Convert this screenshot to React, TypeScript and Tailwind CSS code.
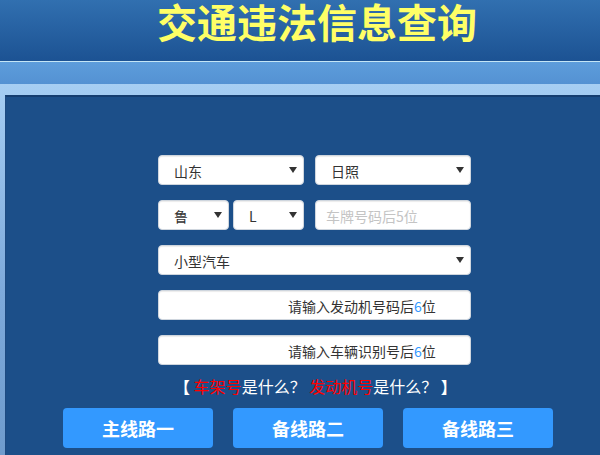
import React from "react";

const font = { fontFamily: '"Microsoft YaHei", "Noto Sans CJK SC", "Noto Sans", sans-serif' };

function Caret() {
  return (
    <span className="absolute right-[6px] top-[11px] h-0 w-0 border-x-[4px] border-t-[6px] border-x-transparent border-t-[#333]" />
  );
}

function SelectBox({ label, className }: { label: string; className: string }) {
  return (
    <div
      className={`relative flex h-[30px] items-center rounded-[4px] border border-[#cfd6de] bg-white pl-[15px] pt-[2px] text-[14px] text-[#333] shadow-[inset_0_1px_1px_rgba(0,0,0,0.08)] ${className}`}
    >
      {label}
      <Caret />
    </div>
  );
}

function TextBox({ children }: { children: React.ReactNode }) {
  return (
    <div className="flex h-[30px] w-[313px] items-center rounded-[4px] border border-[#cfd6de] bg-white pl-[129px] pt-[2px] text-[14px] text-[#333] shadow-[inset_0_1px_1px_rgba(0,0,0,0.08)]">
      {children}
    </div>
  );
}

export default function App() {
  return (
    <div className="h-[455px] w-[600px] overflow-hidden bg-[#1c4f89]" style={font}>
      {/* header */}
      <div className="flex h-[61px] justify-center bg-gradient-to-b from-[#3170b0] to-[#1c5293] pl-[34px]">
        <h1 className="text-[40px] font-bold leading-[42px] text-[#ffff66]">
          交通违法信息查询
        </h1>
      </div>
      <div className="h-px bg-[#c4e6f6]" />
      <div className="h-[22px] bg-gradient-to-b from-[#5d9ddb] to-[#5492d3]" />

      {/* body */}
      <div className="bg-gradient-to-b from-[#a6cef3] via-[#7eaadb] to-[#6b98c9] pl-[5px] pt-[11px]">
        <div className="h-[400px] border-l border-t-2 border-l-[#1e4a80] border-t-[#153e70] bg-[#1c4f89] pt-[58px]">
          <div className="ml-[152px] flex w-[313px] flex-col gap-[15px]">
            <div className="flex justify-between">
              <SelectBox label="山东" className="w-[146px]" />
              <SelectBox label="日照" className="w-[156px]" />
            </div>
            <div className="flex justify-between">
              <div className="flex gap-[4px]">
                <SelectBox label="鲁" className="w-[71px]" />
                <SelectBox label="L" className="w-[71px]" />
              </div>
              <div className="flex h-[30px] w-[156px] items-center rounded-[4px] border border-[#cfd6de] bg-white pl-[10px] pt-[2px] text-[14px] text-[#c4c4c4] shadow-[inset_0_1px_1px_rgba(0,0,0,0.08)]">
                车牌号码后5位
              </div>
            </div>
            <SelectBox label="小型汽车" className="w-[313px]" />
            <TextBox>
              请输入发动机号码后<span className="text-[#3399ff]">6</span>位
            </TextBox>
            <TextBox>
              请输入车辆识别号后<span className="text-[#3399ff]">6</span>位
            </TextBox>
          </div>

          <p className="mt-[10px] pl-[168px] text-[16px] leading-[22px] text-white">
            <span className="font-bold">【</span> <span className="text-[#ff0000]">车架号</span>是什么？ <span className="text-[#ff0000]">发动机号</span>是什么？ <span className="font-bold">】</span>
          </p>

          <div className="ml-[57px] mt-[11px] flex gap-[20px]">
            {["主线路一", "备线路二", "备线路三"].map((t) => (
              <button
                key={t}
                className="h-[40px] w-[150px] rounded-[4px] bg-[#3399ff] text-[18px] font-bold text-white"
              >
                {t}
              </button>
            ))}
          </div>
        </div>
      </div>
    </div>
  );
}
